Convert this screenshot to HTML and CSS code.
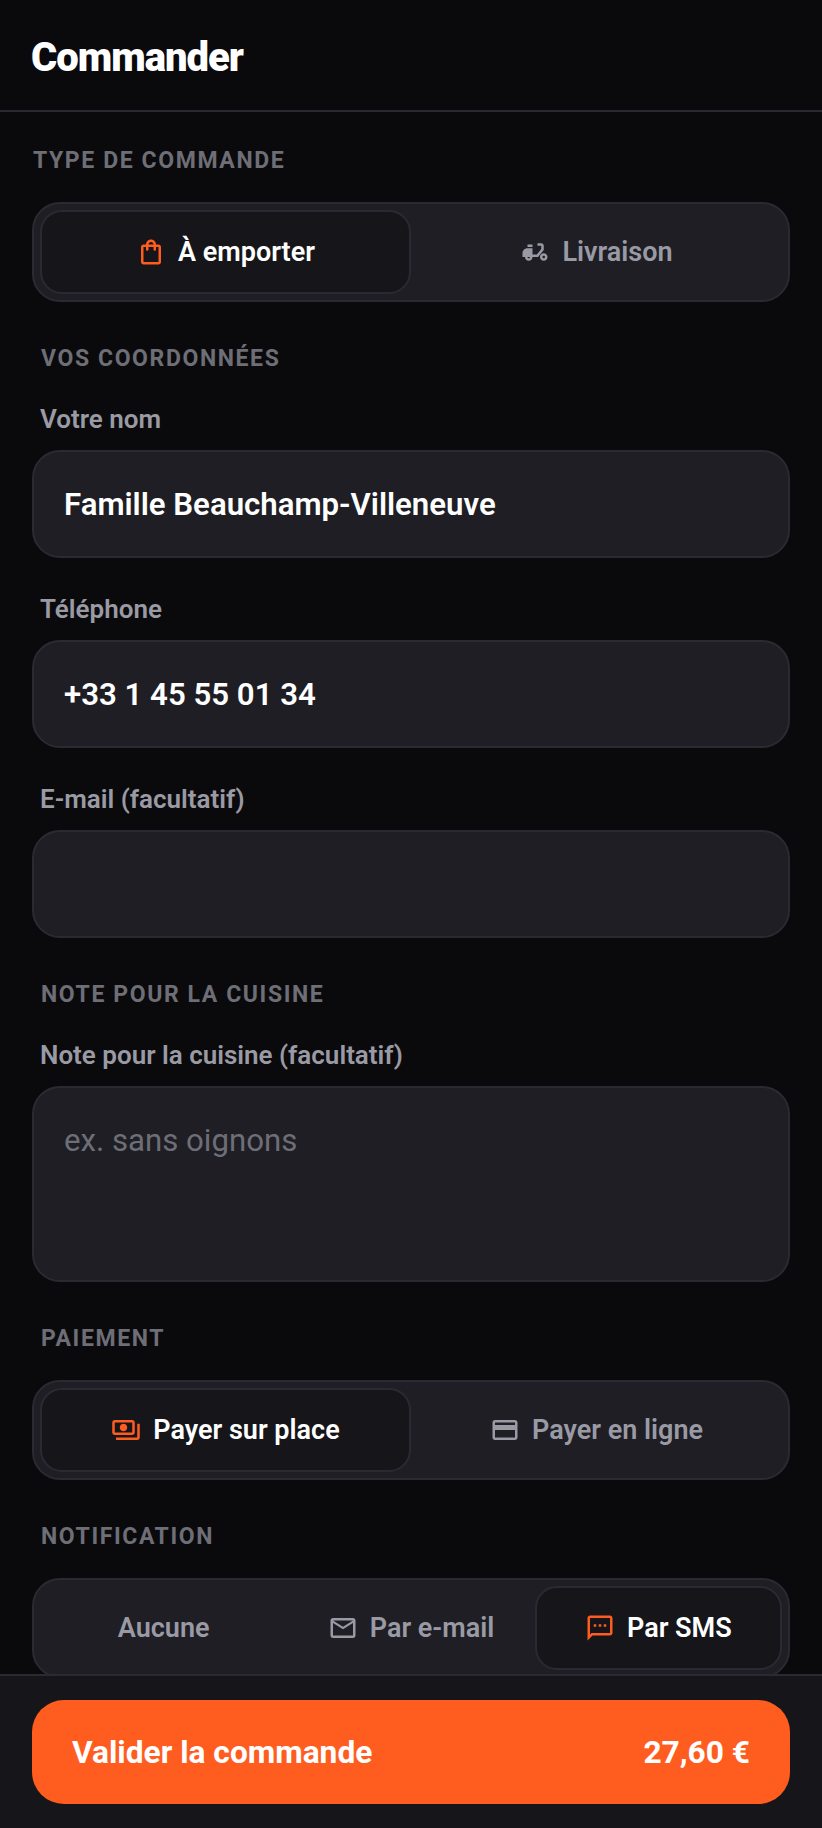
FILE: index.html
```html
<!DOCTYPE html>
<html lang="fr">
<head>
    <meta charset="UTF-8">
    <meta name="viewport" content="width=device-width, initial-scale=1.0">
    <title>Commander</title>
    <link rel="stylesheet" href="styles.css">
</head>
<body>
    <div class="header">
        <h1>Commander</h1>
    </div>

    <div class="content">
        <div class="section-title first">Type de commande</div>
        <div class="segment">
            <button class="segment-item active">
                <svg class="icon" viewBox="0 0 24 24"><path d="M18 6h-2c0-2.21-1.79-4-4-4S8 3.79 8 6H6c-1.1 0-2 .9-2 2v12c0 1.1.9 2 2 2h12c1.1 0 2-.9 2-2V8c0-1.1-.9-2-2-2zm-6-2c1.1 0 2 .9 2 2h-4c0-1.1.9-2 2-2zm6 16H6V8h2v2c0 .55.45 1 1 1s1-.45 1-1V8h4v2c0 .55.45 1 1 1s1-.45 1-1V8h2v12z"/></svg>
                À emporter
            </button>
            <button class="segment-item">
                <svg class="icon" viewBox="0 0 24 24"><path d="M19 7c0-1.1-.9-2-2-2h-3v2h3v2.65L13.52 14H10V9H6c-2.21 0-4 1.79-4 4v3h2c0 1.66 1.34 3 3 3s3-1.34 3-3h4.48L19 10.35V7zM7 17c-.55 0-1-.45-1-1h2c0 .55-.45 1-1 1z"/><path d="M6 6h4v2H6z"/><path d="M19 13c-1.66 0-3 1.34-3 3s1.34 3 3 3 3-1.34 3-3-1.34-3-3-3zm0 4c-.55 0-1-.45-1-1s.45-1 1-1 1 .45 1 1-.45 1-1 1z"/></svg>
                Livraison
            </button>
        </div>

        <div class="section-title">Vos coordonnées</div>
        <label class="field-label">Votre nom</label>
        <div class="input">Famille Beauchamp-Villeneuve</div>
        <label class="field-label">Téléphone</label>
        <div class="input">+33 1 45 55 01 34</div>
        <label class="field-label">E-mail (facultatif)</label>
        <div class="input"></div>

        <div class="section-title">Note pour la cuisine</div>
        <label class="field-label">Note pour la cuisine (facultatif)</label>
        <div class="input textarea">ex. sans oignons</div>

        <div class="section-title">Paiement</div>
        <div class="segment">
            <button class="segment-item active">
                <svg class="icon" viewBox="0 0 24 24"><path d="M19 14V6c0-1.1-.9-2-2-2H3c-1.1 0-2 .9-2 2v8c0 1.1.9 2 2 2h14c1.1 0 2-.9 2-2zm-2 0H3V6h14v8zm-7-7c-1.66 0-3 1.34-3 3s1.34 3 3 3 3-1.34 3-3-1.34-3-3-3zm13 0v11c0 1.1-.9 2-2 2H4v-2h17V7h2z"/></svg>
                Payer sur place
            </button>
            <button class="segment-item">
                <svg class="icon" viewBox="0 0 24 24"><path d="M20 4H4c-1.11 0-1.99.89-1.99 2L2 18c0 1.11.89 2 2 2h16c1.11 0 2-.89 2-2V6c0-1.11-.89-2-2-2zm0 14H4v-6h16v6zm0-10H4V6h16v2z"/></svg>
                Payer en ligne
            </button>
        </div>

        <div class="section-title">Notification</div>
        <div class="segment">
            <button class="segment-item">Aucune</button>
            <button class="segment-item">
                <svg class="icon" viewBox="0 0 24 24"><path d="M20 4H4c-1.1 0-1.99.9-1.99 2L2 18c0 1.1.9 2 2 2h16c1.1 0 2-.9 2-2V6c0-1.1-.9-2-2-2zm0 14H4V8l8 5 8-5v10zm-8-7L4 6h16l-8 5z"/></svg>
                Par e-mail
            </button>
            <button class="segment-item active">
                <svg class="icon" viewBox="0 0 24 24"><path d="M20 2H4c-1.1 0-1.99.9-1.99 2L2 22l4-4h14c1.1 0 2-.9 2-2V4c0-1.1-.9-2-2-2zm0 14H5.17L4 17.17V4h16v12zM7 9h2v2H7zm4 0h2v2h-2zm4 0h2v2h-2z"/></svg>
                Par SMS
            </button>
        </div>
    </div>

    <div class="footer">
        <button class="submit">
            <span>Valider la commande</span>
            <span>27,60 €</span>
        </button>
    </div>
</body>
</html>
```

FILE: styles.css
```css
* {
    box-sizing: border-box;
}
body {
    font-family: Roboto, "Liberation Sans", sans-serif;
    margin: 0;
    height: 100vh;
    background-color: #0a0a0c;
    color: white;
    overflow: hidden;
    display: flex;
    flex-direction: column;
}
.header {
    height: 112px;
    flex-shrink: 0;
    padding: 4px 32px 0 31px;
    display: flex;
    align-items: center;
    border-bottom: 2px solid #2a2a32;
}
.header h1 {
    margin: 0;
    font-size: 40px;
    font-weight: 900;
    letter-spacing: -1px;
}
.content {
    flex: 1;
    min-height: 0;
    overflow: hidden;
    padding: 0 32px;
}
.section-title {
    font-size: 23px;
    line-height: 28px;
    font-weight: 700;
    letter-spacing: 1.6px;
    text-transform: uppercase;
    color: #6e6e77;
    padding-left: 9px;
    margin-top: 43px;
}
.section-title.first {
    padding-left: 1px;
    margin-top: 35px;
    margin-bottom: 27px;
}
.segment {
    display: flex;
    height: 100px;
    padding: 6px;
    background-color: #1e1e24;
    border: 2px solid #2a2a32;
    border-radius: 28px;
    margin-top: 27px;
}
.section-title.first + .segment {
    margin-top: 0;
}
.segment-item {
    flex: 1;
    display: flex;
    align-items: center;
    justify-content: center;
    gap: 12px;
    font-family: inherit;
    font-size: 27px;
    font-weight: 600;
    color: #9a9aa4;
    background: none;
    border: 2px solid transparent;
    border-radius: 22px;
    padding: 0;
}
.segment-item .icon {
    fill: #9a9aa4;
}
.segment-item.active {
    background-color: #15151a;
    border-color: #2a2a32;
    color: white;
}
.segment-item.active .icon {
    fill: #ff5c1f;
}
.icon {
    width: 30px;
    height: 30px;
    flex-shrink: 0;
}
.field-label {
    display: block;
    font-size: 26px;
    line-height: 30px;
    font-weight: 600;
    color: #9a9aa4;
    padding-left: 8px;
    margin-top: 15px;
    margin-bottom: 16px;
}
.input {
    height: 108px;
    padding: 1px 30px 0;
    display: flex;
    align-items: center;
    font-size: 31.2px;
    font-weight: 600;
    background-color: #1e1e24;
    border: 2px solid #2a2a32;
    border-radius: 28px;
    margin-bottom: 36px;
}
.section-title + .field-label {
    margin-top: 31px;
}
.input.textarea {
    height: 196px;
    align-items: flex-start;
    padding-top: 35px;
    font-weight: 400;
    color: #6e6e77;
    line-height: 36px;
}
.input + .section-title {
    margin-top: 43px;
}
.footer {
    height: 154px;
    flex-shrink: 0;
    padding: 24px 32px 0;
    background-color: #15151a;
    border-top: 2px solid #2a2a32;
}
.submit {
    width: 100%;
    height: 104px;
    padding: 0 40px;
    display: flex;
    align-items: center;
    justify-content: space-between;
    font-family: inherit;
    font-size: 31.7px;
    font-weight: 700;
    color: white;
    background-color: #ff5c1f;
    border: none;
    border-radius: 32px;
}
```
